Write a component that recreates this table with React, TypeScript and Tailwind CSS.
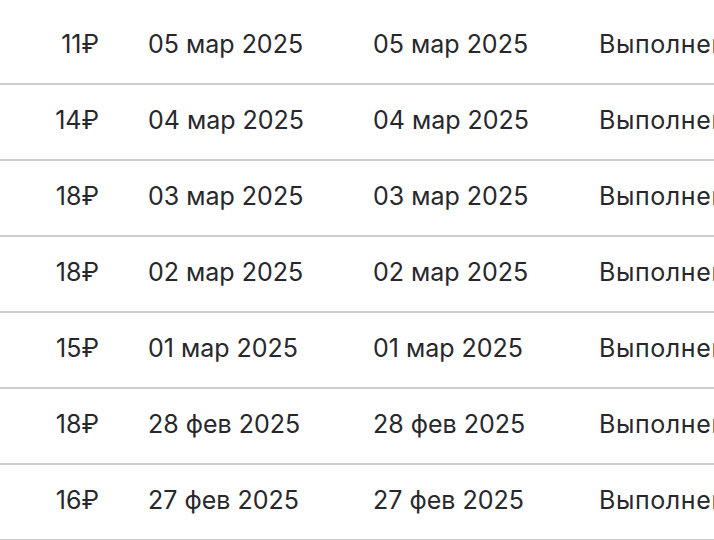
import React from "react";

const rows = [
  ["11₽", "05 мар 2025"],
  ["14₽", "04 мар 2025"],
  ["18₽", "03 мар 2025"],
  ["18₽", "02 мар 2025"],
  ["15₽", "01 мар 2025"],
  ["18₽", "28 фев 2025"],
  ["16₽", "27 фев 2025"],
];

export default function App() {
  return (
    <div
      className="w-[714px] h-[540px] overflow-hidden bg-white pt-[9px] text-[#27272c]"
      style={{ fontFamily: "Inter, 'Noto Sans', sans-serif" }}
    >
      {rows.map(([amt, date], i) => (
        <div
          key={i}
          className="flex items-center h-[76px] pb-[3px] border-b-2 border-[#cdcdcd] text-[25px] whitespace-nowrap"
        >
          <div className="w-[99px] text-right shrink-0">{amt}</div>
          <div className="w-[225px] pl-[49px] box-content shrink-0">{date}</div>
          <div className="w-[226px] shrink-0">{date}</div>
          <div className="shrink-0 tracking-[0.6px]">Выполнено</div>
        </div>
      ))}
    </div>
  );
}
